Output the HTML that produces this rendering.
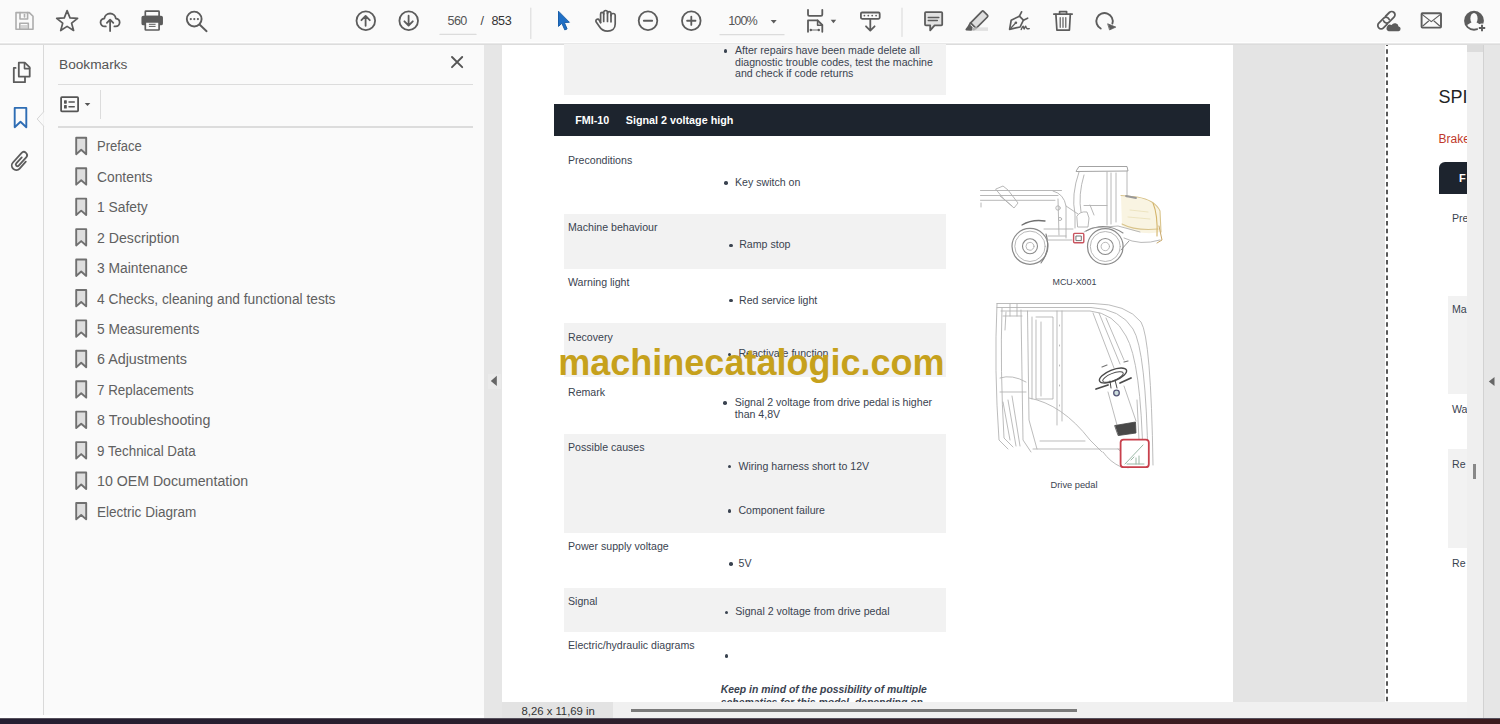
<!DOCTYPE html>
<html><head><meta charset="utf-8"><style>
*{margin:0;padding:0;box-sizing:border-box}
html,body{width:1500px;height:724px;overflow:hidden;background:#f8f8f8;font-family:"Liberation Sans",sans-serif}
.a{position:absolute}
.t{position:absolute;white-space:nowrap;line-height:1}
svg{position:absolute;overflow:visible}
</style></head><body>
<div class="a" style="left:0px;top:0px;width:1500px;height:43px;background:#fafafa;"></div>
<div class="a" style="left:0px;top:44px;width:43px;height:674px;background:#fbfbfb;"></div>
<div class="a" style="left:43px;top:44px;width:1px;height:674px;background:#d9d9d9;"></div>
<div class="a" style="left:44px;top:44px;width:1px;height:674px;background:#ffffff;"></div>
<div class="a" style="left:44px;top:44px;width:440px;height:674px;background:#fafafa;"></div>
<div class="a" style="left:484px;top:44px;width:18px;height:674px;background:#e6e6e6;"></div>
<div class="a" style="left:502px;top:44px;width:731px;height:659px;background:#ffffff;"></div>
<div class="a" style="left:1233px;top:44px;width:152px;height:659px;background:#e4e4e4;"></div>
<div class="a" style="left:1385px;top:44px;width:3px;height:659px;background:#ffffff;"></div>
<svg width="1500" height="724" style="position:absolute;left:0;top:0"><line x1="1387" y1="44" x2="1387" y2="703" stroke="#505050" stroke-width="1.9" stroke-dasharray="4.5 3.3" stroke-dashoffset="2.45"/></svg>
<div class="a" style="left:1388px;top:44px;width:79px;height:659px;background:#ffffff;"></div>
<div class="a" style="left:1467px;top:44px;width:16px;height:674px;background:#efefef;"></div>
<div class="a" style="left:1467px;top:44px;width:16px;height:8px;background:#dcdcdc;"></div>
<div class="a" style="left:1483px;top:44px;width:1px;height:674px;background:#d2d2d2;"></div>
<div class="a" style="left:1484px;top:44px;width:16px;height:674px;background:#e6e6e6;"></div>
<div class="a" style="left:502px;top:702px;width:965px;height:16px;background:#f0f0f0;"></div>
<div class="a" style="left:502px;top:702px;width:111px;height:16px;background:#e3e3e3;"></div>
<div class="a" style="left:631px;top:709px;width:446px;height:3px;background:#7a7a7a;"></div>
<div class="a" style="left:0px;top:715px;width:484px;height:3px;background:#ffffff;"></div>
<div class="a" style="left:0px;top:718px;width:1500px;height:6px;background:linear-gradient(to right,#241e31 0%,#2a1f2d 35%,#33202a 55%,#3a1c21 72%,#3b1a1e 100%);"></div>
<div class="a" style="left:0px;top:718px;width:1500px;height:1px;background:#55505c;"></div>
<div class="t" style="left:447.50px;top:15.33px;font-size:12.6px;color:#555;font-weight:400;font-style:normal;letter-spacing:-0.6px">560</div>
<div class="t" style="left:480.50px;top:15.33px;font-size:12.6px;color:#444;font-weight:400;font-style:normal;">/</div>
<div class="t" style="left:491.50px;top:15.33px;font-size:12.6px;color:#333;font-weight:400;font-style:normal;letter-spacing:-0.4px">853</div>
<div class="t" style="left:728.20px;top:15.33px;font-size:12.6px;color:#555;font-weight:400;font-style:normal;letter-spacing:-0.9px">100%</div>
<div class="a" style="left:0px;top:42px;width:1500px;height:1px;background:#fefefe;"></div>
<div class="a" style="left:0px;top:43px;width:1500px;height:1px;background:#e8e8e8;"></div>
<div class="a" style="left:0px;top:44px;width:1500px;height:1px;background:#dcdcdc;"></div>
<div class="t" style="left:521.50px;top:706.23px;font-size:11.3px;color:#333;font-weight:400;font-style:normal;">8,26 x 11,69 in</div>
<div class="t" style="left:59.00px;top:57.60px;font-size:13.7px;color:#555;font-weight:400;font-style:normal;">Bookmarks</div>
<div class="a" style="left:57.5px;top:83.5px;width:415px;height:1.5px;background:#dcdcdc;"></div>
<div class="a" style="left:100px;top:90px;width:1px;height:29px;background:#dcdcdc;"></div>
<div class="a" style="left:57.5px;top:126px;width:415px;height:1.5px;background:#dcdcdc;"></div>
<div class="t" style="left:97.30px;top:139.45px;font-size:14px;color:#606060;font-weight:400;font-style:normal;transform:scaleX(0.9298);transform-origin:0 0">Preface</div>
<div class="t" style="left:97.30px;top:169.88px;font-size:14px;color:#606060;font-weight:400;font-style:normal;transform:scaleX(0.9873);transform-origin:0 0">Contents</div>
<div class="t" style="left:97.30px;top:200.31px;font-size:14px;color:#606060;font-weight:400;font-style:normal;transform:scaleX(0.988);transform-origin:0 0">1 Safety</div>
<div class="t" style="left:97.30px;top:230.74px;font-size:14px;color:#606060;font-weight:400;font-style:normal;transform:scaleX(1.0088);transform-origin:0 0">2 Description</div>
<div class="t" style="left:97.30px;top:261.17px;font-size:14px;color:#606060;font-weight:400;font-style:normal;transform:scaleX(0.9889);transform-origin:0 0">3 Maintenance</div>
<div class="t" style="left:97.30px;top:291.60px;font-size:14px;color:#606060;font-weight:400;font-style:normal;transform:scaleX(0.9822);transform-origin:0 0">4 Checks, cleaning and functional tests</div>
<div class="t" style="left:97.30px;top:322.03px;font-size:14px;color:#606060;font-weight:400;font-style:normal;transform:scaleX(0.9806);transform-origin:0 0">5 Measurements</div>
<div class="t" style="left:97.30px;top:352.46px;font-size:14px;color:#606060;font-weight:400;font-style:normal;transform:scaleX(1.023);transform-origin:0 0">6 Adjustments</div>
<div class="t" style="left:97.30px;top:382.89px;font-size:14px;color:#606060;font-weight:400;font-style:normal;transform:scaleX(0.957);transform-origin:0 0">7 Replacements</div>
<div class="t" style="left:97.30px;top:413.32px;font-size:14px;color:#606060;font-weight:400;font-style:normal;transform:scaleX(1.0183);transform-origin:0 0">8 Troubleshooting</div>
<div class="t" style="left:97.30px;top:443.75px;font-size:14px;color:#606060;font-weight:400;font-style:normal;transform:scaleX(0.9549);transform-origin:0 0">9 Technical Data</div>
<div class="t" style="left:97.30px;top:474.18px;font-size:14px;color:#606060;font-weight:400;font-style:normal;transform:scaleX(1.0116);transform-origin:0 0">10 OEM Documentation</div>
<div class="t" style="left:97.30px;top:504.61px;font-size:14px;color:#606060;font-weight:400;font-style:normal;transform:scaleX(0.9673);transform-origin:0 0">Electric Diagram</div>
<div class="a" style="left:563.5px;top:44px;width:382.5px;height:50.5px;background:#f2f2f2;"></div>
<div class="a" style="left:723.6px;top:49.3px;width:3.6px;height:3.6px;background:#3a4350;border-radius:50%"></div>
<div class="t" style="left:735.00px;top:44.93px;font-size:10.6px;color:#3a4350;font-weight:400;font-style:normal;">After repairs have been made delete all</div>
<div class="t" style="left:735.00px;top:56.53px;font-size:10.6px;color:#3a4350;font-weight:400;font-style:normal;">diagnostic trouble codes, test the machine</div>
<div class="t" style="left:735.00px;top:68.03px;font-size:10.6px;color:#3a4350;font-weight:400;font-style:normal;">and check if code returns</div>
<div class="a" style="left:554px;top:103.7px;width:656px;height:32px;background:#1d242e;"></div>
<div class="t" style="left:575.20px;top:114.60px;font-size:10.75px;color:#fff;font-weight:700;font-style:normal;">FMI-10</div>
<div class="t" style="left:625.80px;top:114.60px;font-size:10.75px;color:#fff;font-weight:700;font-style:normal;">Signal 2 voltage high</div>
<div class="a" style="left:563.5px;top:213.5px;width:382.5px;height:55px;background:#f2f2f2;"></div>
<div class="a" style="left:563.5px;top:323.3px;width:382.5px;height:53.9px;background:#f2f2f2;"></div>
<div class="a" style="left:563.5px;top:434.1px;width:382.5px;height:99.4px;background:#f2f2f2;"></div>
<div class="a" style="left:563.5px;top:588px;width:382.5px;height:44.4px;background:#f2f2f2;"></div>
<div class="t" style="left:568.00px;top:154.53px;font-size:10.6px;color:#3a4350;font-weight:400;font-style:normal;">Preconditions</div>
<div class="a" style="left:724px;top:181.0px;width:3.6px;height:3.6px;background:#3a4350;border-radius:50%"></div>
<div class="t" style="left:735.00px;top:176.63px;font-size:10.6px;color:#3a4350;font-weight:400;font-style:normal;">Key switch on</div>
<div class="t" style="left:568.00px;top:221.63px;font-size:10.6px;color:#3a4350;font-weight:400;font-style:normal;">Machine behaviour</div>
<div class="a" style="left:729px;top:243.70000000000002px;width:3.6px;height:3.6px;background:#3a4350;border-radius:50%"></div>
<div class="t" style="left:739.20px;top:239.33px;font-size:10.6px;color:#3a4350;font-weight:400;font-style:normal;">Ramp stop</div>
<div class="t" style="left:568.00px;top:276.93px;font-size:10.6px;color:#3a4350;font-weight:400;font-style:normal;">Warning light</div>
<div class="a" style="left:729px;top:298.9px;width:3.6px;height:3.6px;background:#3a4350;border-radius:50%"></div>
<div class="t" style="left:739.00px;top:294.53px;font-size:10.6px;color:#3a4350;font-weight:400;font-style:normal;">Red service light</div>
<div class="t" style="left:568.00px;top:331.73px;font-size:10.6px;color:#3a4350;font-weight:400;font-style:normal;">Recovery</div>
<div class="a" style="left:727.8px;top:352.5px;width:3.6px;height:3.6px;background:#3a4350;border-radius:50%"></div>
<div class="t" style="left:738.40px;top:348.13px;font-size:10.6px;color:#3a4350;font-weight:400;font-style:normal;">Reactivate function</div>
<div class="t" style="left:568.00px;top:387.03px;font-size:10.6px;color:#3a4350;font-weight:400;font-style:normal;">Remark</div>
<div class="a" style="left:723.3px;top:401.4px;width:3.6px;height:3.6px;background:#3a4350;border-radius:50%"></div>
<div class="t" style="left:734.80px;top:397.03px;font-size:10.6px;color:#3a4350;font-weight:400;font-style:normal;">Signal 2 voltage from drive pedal is higher</div>
<div class="t" style="left:734.80px;top:408.93px;font-size:10.6px;color:#3a4350;font-weight:400;font-style:normal;">than 4,8V</div>
<div class="t" style="left:568.00px;top:442.33px;font-size:10.6px;color:#3a4350;font-weight:400;font-style:normal;">Possible causes</div>
<div class="a" style="left:727.8px;top:464.9px;width:3.6px;height:3.6px;background:#3a4350;border-radius:50%"></div>
<div class="t" style="left:738.40px;top:460.53px;font-size:10.6px;color:#3a4350;font-weight:400;font-style:normal;">Wiring harness short to 12V</div>
<div class="a" style="left:727.8px;top:509.0px;width:3.6px;height:3.6px;background:#3a4350;border-radius:50%"></div>
<div class="t" style="left:738.40px;top:504.63px;font-size:10.6px;color:#3a4350;font-weight:400;font-style:normal;">Component failure</div>
<div class="t" style="left:568.00px;top:541.03px;font-size:10.6px;color:#3a4350;font-weight:400;font-style:normal;">Power supply voltage</div>
<div class="a" style="left:729px;top:562.4px;width:3.6px;height:3.6px;background:#3a4350;border-radius:50%"></div>
<div class="t" style="left:738.60px;top:558.03px;font-size:10.6px;color:#3a4350;font-weight:400;font-style:normal;">5V</div>
<div class="t" style="left:568.00px;top:595.73px;font-size:10.6px;color:#3a4350;font-weight:400;font-style:normal;">Signal</div>
<div class="a" style="left:724.9px;top:610.5px;width:3.6px;height:3.6px;background:#3a4350;border-radius:50%"></div>
<div class="t" style="left:735.30px;top:606.13px;font-size:10.6px;color:#3a4350;font-weight:400;font-style:normal;">Signal 2 voltage from drive pedal</div>
<div class="t" style="left:568.00px;top:639.53px;font-size:10.6px;color:#3a4350;font-weight:400;font-style:normal;">Electric/hydraulic diagrams</div>
<div class="a" style="left:724.9px;top:654.4px;width:3.6px;height:3.6px;background:#3a4350;border-radius:50%"></div>
<div class="a" style="left:502px;top:44px;width:731px;height:658px;overflow:hidden">
<div class="t" style="left:218.80px;top:640.70px;font-size:10.4px;color:#3a4350;font-weight:700;font-style:italic;">Keep in mind of the possibility of multiple</div>
<div class="t" style="left:218.80px;top:654.00px;font-size:10.4px;color:#3a4350;font-weight:700;font-style:italic;">schematics for this model, depending on</div>
</div>
<div class="t" style="left:1052.50px;top:278.27px;font-size:8.9px;color:#3a4350;font-weight:400;font-style:normal;">MCU-X001</div>
<div class="t" style="left:1050.50px;top:481.03px;font-size:9.3px;color:#3a4350;font-weight:400;font-style:normal;">Drive pedal</div>
<svg width="1500" height="724" style="left:0;top:0;position:absolute" fill="none" stroke-linecap="round" stroke-linejoin="round">
<path d="M1121,196 L1137,197.5 Q1155,201 1160,212 L1161,232 Q1140,236 1122,226 Z" fill="#f9f4e2" stroke="none"/>
<g stroke="#b0b0b0" stroke-width="0.9">
<path d="M980.5,190.5 H1061.5 M980.5,195.5 H1058 M980.5,200.3 H1055 M981,203 V207"/>
<path d="M996,189 L1003,186 L1008,190 L1018,203 L1014,208 L1004,199 Z M1000,196 L1012,206"/>
<path d="M1053,191 Q1064,194 1066,206 L1066,238 M1058,199 L1059,235 M1048,236 L1066,236"/>
<circle cx="1058" cy="208" r="2.2" /><circle cx="1060" cy="219" r="1.6"/>
<circle cx="1030" cy="246.3" r="18" stroke="#8a8a8a" stroke-width="1.2"/><circle cx="1030" cy="246.3" r="15.2"/><circle cx="1030" cy="246.3" r="7.5" stroke="#8a8a8a" stroke-width="1.1"/><circle cx="1030" cy="246.3" r="4"/>
<path d="M1022,225 Q1032,219 1045,221" stroke="#707070" stroke-width="1.3"/><path d="M1046,234 Q1051,250 1041,263" stroke="#808080" stroke-width="1.1"/>
<path d="M1044,229 L1073,229 M1047,240 L1072,240 M1084,232 L1092,228 L1118,226 L1140,232 M1066,206 L1078,214"/>
<path d="M1076.5,170.5 L1079,166.5 H1127 L1128,171 L1076.5,171.5 Z" stroke="#999"/>
<path d="M1079,172 Q1071,195 1075,214 L1075,228 M1084,175 Q1078,195 1081,212 M1084,205.5 H1107 M1107,172 V225 M1111,173 V224 M1116,173 V222 M1127,171 V197 M1090,205 L1094,215"/>
<path d="M1077,216 Q1080,211 1087,212 L1089,218 L1088,227 L1078,227 Z"/>
<circle cx="1105.3" cy="246.5" r="17.8" stroke="#8a8a8a" stroke-width="1.2"/><circle cx="1105.3" cy="246.5" r="15"/><circle cx="1105.3" cy="246.5" r="8" stroke="#8a8a8a" stroke-width="1.1"/><circle cx="1105.3" cy="246.5" r="4.2"/>
<path d="M1086,231 Q1105,221 1123,233" stroke="#8a8a8a" stroke-width="1.1"/><path d="M1121,250 L1129,241" stroke="#888"/><path d="M1124,238 Q1140,246 1160,240"/>
</g>
<g stroke="#d9c48c" stroke-width="1.1"><path d="M1121,195.5 L1137,197 Q1155,200 1160,211 L1161,232 M1122,224 Q1135,231 1158,229"/><path d="M1153,203 Q1158,215 1157,236" stroke="#d4b46a"/><path d="M1126,196 L1136,198" stroke="#999" stroke-width="1.8"/><path d="M1130,210 L1148,212 M1128,217 L1150,219" stroke="#eadfb8" stroke-width="0.8"/></g>
<path d="M1159,226 L1162,240 L1157,243" stroke="#c9a86a" stroke-width="1"/>
<rect x="1073.6" y="233.4" width="10.2" height="9.4" rx="1" stroke="#c9535e" stroke-width="1.4"/><rect x="1076.3" y="236" width="5" height="4.6" stroke="#666" stroke-width="0.9"/>
<g stroke="#b0b0b0" stroke-width="0.85">
<path d="M997,303.5 H1093 Q1127,304 1141,322 Q1151,338 1153,465"/>
<path d="M997,307.5 H1091 Q1121,309 1133,329 Q1146,350 1148,462"/>
<path d="M1001,311 H1090 Q1114,313 1126,336 Q1141,362 1143,460"/>
<path d="M997,303.5 Q994,370 999,440 L1008,449 M1002,308 Q1000,370 1004,438 L1013,447 M1006,312 L1005,330 M1010,304 V316 M1017,304 V316 M1003,316 H1022"/>
<path d="M1021,310 L1023,440 L1031,452 M1027.5,311 L1029,420 L1037,449"/>
<path d="M1032,317 V399 M1036,320 V399 H1053 V317 H1036 M1041,322 V396"/>
<path d="M1057,311 V425 M1062,311 V421 M1059.5,325 v1 M1059.5,345 v1 M1059.5,365 v1 M1059.5,385 v1 M1059.5,405 v1"/>
<path d="M1029,398 Q1062,404 1090,440 L1102,452 M1033,449 H1120 M1040,441 H1085"/>
<path d="M1093,313 L1114,368 M1099,313 L1120,364 M1106,318 L1124,360"/>
<path d="M1000,378 Q1012,374 1026,382 M1000,392 H1026 M1003,402 L1010,440 M1008,400 L1016,446 M1012,396 L1020,446"/>
<path d="M1108,392 L1117,425 M1124,386 L1136,421 M1137,400 L1139,440 M1130,440 L1128,468 M1103,452 Q1110,462 1121,467 M1125,455 L1118,449"/>
</g>
<g stroke="#4a4a4a" stroke-width="1.4"><ellipse cx="1113" cy="375.5" rx="14.5" ry="5.6" transform="rotate(-22 1113 375.5)"/><ellipse cx="1113" cy="377" rx="11" ry="3.6" transform="rotate(-22 1113 377)" stroke-width="0.9"/><path d="M1096,389 L1108,385 M1120,383 L1131,378" stroke-width="1.8"/><path d="M1110,381 L1111,388 M1115,380 L1117,388" stroke-width="1"/></g>
<path d="M1102,367 L1107,365 M1124,362 L1128,361" stroke="#777" stroke-width="1.2"/>
<circle cx="1116.5" cy="393" r="2.8" stroke="#557" stroke-width="1.3" fill="#cdd"/>
<path d="M1115,425.5 L1135.5,422 L1136,433 L1118.5,435.5 Z" fill="#484848" stroke="#484848" stroke-width="0.8"/>
<rect x="1120.6" y="439.6" width="28.2" height="27.6" rx="3" stroke="#c8404c" stroke-width="1.8" fill="#fff"/>
<path d="M1125,464 L1143,445 M1127,464 H1144 M1136,458 V464 M1139,456 V464 M1131,460 L1134,457" stroke="#9bb8a6" stroke-width="1"/>
</svg>
<div class="t" style="left:558.30px;top:344.83px;font-size:36px;color:#c6a11c;font-weight:700;font-style:normal;">machinecatalogic.com</div>
<div class="a" style="left:1388px;top:44px;width:79px;height:659px;overflow:hidden">
<div class="t" style="left:50.60px;top:43.76px;font-size:18px;color:#222;font-weight:400;font-style:normal;">SPI</div>
<div class="t" style="left:50.60px;top:88.64px;font-size:12px;color:#c0392b;font-weight:400;font-style:normal;">Brake</div>
<div class="a" style="left:50.5px;top:117.5px;width:60px;height:32.5px;background:#1d242e;border-radius:6px 0 0 0"></div>
<div class="t" style="left:71.00px;top:128.69px;font-size:11px;color:#fff;font-weight:700;font-style:normal;">F</div>
<div class="t" style="left:64.00px;top:169.03px;font-size:10.6px;color:#3a4350;font-weight:400;font-style:normal;">Pre</div>
<div class="a" style="left:60px;top:251.8px;width:30px;height:98.5px;background:#f2f2f2"></div>
<div class="t" style="left:64.00px;top:260.03px;font-size:10.6px;color:#3a4350;font-weight:400;font-style:normal;">Ma</div>
<div class="t" style="left:64.00px;top:360.03px;font-size:10.6px;color:#3a4350;font-weight:400;font-style:normal;">Wa</div>
<div class="a" style="left:60px;top:405.4px;width:30px;height:98.6px;background:#f2f2f2"></div>
<div class="t" style="left:64.00px;top:414.73px;font-size:10.6px;color:#3a4350;font-weight:400;font-style:normal;">Re</div>
<div class="t" style="left:64.00px;top:513.83px;font-size:10.6px;color:#3a4350;font-weight:400;font-style:normal;">Re</div>
</div>
<div class="a" style="left:1473px;top:464px;width:2.5px;height:14.5px;background:#888;"></div>
<svg width="1500" height="724" style="left:0;top:0;position:absolute" fill="none" stroke-linecap="round" stroke-linejoin="round">
<g stroke="#adadad" stroke-width="1.6"><path d="M16,12.6 H29.3 L33,16.3 V29.2 H16 Z"/><path d="M20,12.6 V19 H27.6 V12.6"/><path d="M19.8,29.2 V23.2 H28.3 V29.2"/><path d="M24.5,14.5 V17" /><path d="M21,26 H27 M21,28 H27" stroke-width="1"/></g>
<path d="M67.1,10.6 L70,17.9 L77.6,18.3 L71.6,23.2 L73.6,30.5 L67.1,26.4 L60.7,30.5 L62.7,23.2 L56.7,18.3 L64.3,17.9 Z" stroke="#5c5c5c" stroke-width="1.7"/>
<g stroke="#5c5c5c" stroke-width="1.8"><path d="M105.8,26.4 H104.6 A3.95,3.95 0 0 1 104.4,18.5 A5.75,5.75 0 0 1 115.8,18.5 A3.95,3.95 0 0 1 115.6,26.4 H114.4"/><path d="M110.1,31 V19.8 M106.9,22.8 L110.1,19.6 L113.3,22.8"/></g>
<g stroke="#5c5c5c" stroke-width="1.7"><rect x="145.3" y="11.2" width="13.8" height="5.4" rx="0.6"/><rect x="142.3" y="16.6" width="19.8" height="7.8" rx="1" fill="#5c5c5c"/><rect x="145.3" y="21.8" width="13.8" height="8.2" rx="0.6" fill="#fafafa"/><path d="M149.3,24.3 H155.2 M149.3,26.4 H155.2" stroke-width="1"/></g>
<g stroke="#5c5c5c" stroke-width="1.9"><circle cx="194.2" cy="19.05" r="7.4"/><path d="M199.8,24.7 L206.6,31.2"/></g><g fill="#5c5c5c"><circle cx="190.8" cy="19.1" r="1.1"/><circle cx="194.3" cy="19.1" r="1.1"/><circle cx="197.9" cy="19.1" r="1.1"/></g>
<g stroke="#5c5c5c" stroke-width="1.8"><circle cx="365.8" cy="20.75" r="9.3"/><path d="M365.6,25.8 V16.3 M361.4,20.2 L365.6,16 L369.8,20.2"/><circle cx="408.7" cy="20.75" r="9.3"/><path d="M408.6,15.7 V25.2 M404.4,21.3 L408.6,25.5 L412.8,21.3"/></g>
<path d="M530.8,8 V38.5 M902,8 V36.5" stroke="#dedede" stroke-width="1.2"/>
<path d="M558.5,11.6 L558.5,26.4 L561.9,23.3 L564.8,29.9 L567.1,28.9 L564.3,22.5 L569,22.3 Z" fill="#1f6fc6" stroke="#1a5ea8" stroke-width="1"/>
<g stroke="#5c5c5c" stroke-width="1.7"><path d="M600.6,22.6 V13.9 A1.55,1.55 0 0 1 603.7,13.9 V21.4"/><path d="M603.7,13.9 V12.4 A1.9,1.9 0 0 1 607.5,12.4 V21.4"/><path d="M607.5,13.4 A1.75,1.75 0 0 1 611,13.4 V21.8"/><path d="M611,15.6 A2.1,2.1 0 0 1 615.2,15.6 V24 C615.2,28.6 612,31.1 607.6,31.1 C603.4,31.1 601,29.4 599,26 L596.2,21.9 A1.75,1.75 0 0 1 599.1,19.9 L600.6,22.6"/></g>
<g stroke="#5c5c5c" stroke-width="1.8"><circle cx="648" cy="20.75" r="9.3"/><path d="M643.8,20.75 H652.2"/><circle cx="691.3" cy="20.75" r="9.3"/><path d="M687.1,20.75 H695.5 M691.3,16.55 V24.95"/></g>
<path d="M770.7,20 H776.7 L773.7,23.4 Z" fill="#5c5c5c"/>
<path d="M720,34.7 H784" stroke="#dcdcdc" stroke-width="1.3"/>
<path d="M440,34.4 H476" stroke="#dcdcdc" stroke-width="1.3"/>
<g stroke="#5c5c5c" stroke-width="1.8"><path d="M808,9.8 V14.6 Q808,15.9 809.3,15.9 H821 Q822.3,15.9 822.3,14.6 V9.8"/><path d="M808,31.8 V20.4 H817.6 L822.3,25 V31.8"/><path d="M817.6,20.4 V25.2 H822.3" stroke-width="1.6"/></g>
<g fill="#5c5c5c"><circle cx="810.8" cy="30" r="1.2"/><circle cx="818.8" cy="30" r="1.2"/></g><path d="M811,30 H818.6" stroke="#5c5c5c" stroke-width="0.9"/>
<path d="M830.7,19.8 H836.2 L833.45,23.3 Z" fill="#5c5c5c"/>
<g stroke="#5c5c5c" stroke-width="1.8"><rect x="860.9" y="12.5" width="18.8" height="6.3" rx="1.2"/><path d="M870.3,19.5 V30.4 M866,26.3 L870.3,30.6 L874.6,26.3"/></g><g fill="#5c5c5c"><circle cx="864.4" cy="15.6" r="0.9"/><circle cx="868.3" cy="15.6" r="0.9"/><circle cx="872.2" cy="15.6" r="0.9"/><circle cx="876.1" cy="15.6" r="0.9"/></g>
<g stroke="#5c5c5c" stroke-width="1.8"><path d="M925.9,12.1 H941.3 Q942.2,12.1 942.2,13 V24.5 Q942.2,25.4 941.3,25.4 H934.6 L930.2,30.4 V25.4 H925.9 Q925,25.4 925,24.5 V13 Q925,12.1 925.9,12.1 Z" fill="#e2e2e2"/><path d="M928.3,17.4 H938.8 M928.3,20.5 H937.3" stroke-width="1.5"/></g>
<g stroke="#5c5c5c" stroke-width="1.7"><path d="M983.6,11.4 L987.4,15.2 Q988.3,16.1 987.4,17 L976.1,28.3 L970.6,22.8 L981.9,11.4 Q982.7,10.5 983.6,11.4 Z" fill="#dedede"/><path d="M970.6,22.8 L969.2,25.2 L973.7,29.7 L976.1,28.3"/><path d="M969.2,25.6 L966.3,29.6 L970.8,30 L972.8,29.2 Z" fill="#5c5c5c"/></g><rect x="972" y="27.4" width="16" height="3.5" fill="#d6d6d6" opacity="0.7"/>
<g stroke="#5c5c5c" stroke-width="1.7"><path d="M1009.6,29.4 L1011.2,20.2 L1019.4,16.2 L1023.4,20.2 L1020.1,27 Z"/><path d="M1019.4,16.2 L1021.6,11.8 M1023.4,20.2 L1027.6,18.2"/><path d="M1010,29 L1015.6,23" stroke-width="1.2"/></g><circle cx="1015.9" cy="22.8" r="1.3" fill="#5c5c5c"/><path d="M1021.2,29.6 Q1022.4,26.4 1023.2,26.2 Q1023.4,28.6 1024.2,29 Q1025,26.6 1025.8,26.2 Q1026,29.2 1029.3,28.6" stroke="#5c5c5c" stroke-width="1.4"/>
<g stroke="#5c5c5c" stroke-width="1.7"><path d="M1053.8,14.1 H1072.2"/><path d="M1059.6,13.8 V11.6 H1066.6 V13.8"/><path d="M1055.9,14.4 L1056.9,30.2 H1069.4 L1070.3,14.4"/><path d="M1060.2,17.6 V27.3 M1063,17.6 V27.3 M1065.8,17.6 V27.3" stroke-width="1.2"/></g>
<path d="M1100.7,28.5 A8.2,8.2 0 1 1 1112.4,23.6" stroke="#5c5c5c" stroke-width="1.9"/><path d="M1108,23.9 L1115.8,27.1 L1109.9,29.8 Z" fill="#5c5c5c" stroke="#5c5c5c" stroke-width="0.8"/>
<g stroke="#5c5c5c" stroke-width="1.8"><g transform="translate(1389.2,17.3) rotate(-45)"><path d="M-1.8,-3.3 H3.5 A3.3,3.3 0 0 1 3.5,3.3 H-3.5 A3.3,3.3 0 0 1 -6.45,-1.5"/></g><g transform="translate(1383.6,23.0) rotate(-45)"><path d="M1.8,3.3 H-3.5 A3.3,3.3 0 0 1 -3.5,-3.3 H3.5 A3.3,3.3 0 0 1 6.45,1.5"/></g></g>
<path d="M1388.6,31.3 H1398.6 A2.5,2.5 0 0 0 1398.6,26.4 A3.8,3.8 0 0 0 1391.6,25 A3.1,3.1 0 0 0 1388.6,31.3 Z" fill="#5c5c5c"/>
<g stroke="#5c5c5c"><rect x="1421.6" y="13.2" width="19.4" height="14.4" rx="0.8" stroke-width="1.9"/><path d="M1422.4,14.6 L1431.3,21.6 L1440.2,14.6" stroke-width="1.2"/><path d="M1422.8,26 L1428.6,21 M1434,21 L1439.8,26" stroke-width="1.1"/></g>
<defs><clipPath id="uc"><circle cx="1474" cy="20.75" r="8.1"/></clipPath></defs>
<circle cx="1474" cy="20.75" r="9.9" fill="#5c5c5c"/>
<g clip-path="url(#uc)" fill="#fafafa"><ellipse cx="1474" cy="18.4" rx="3.6" ry="5.4"/><path d="M1471.6,22.2 H1476.4 L1482.5,26 V32 H1465.5 V26 Z"/></g>
<circle cx="1482" cy="28" r="4.4" fill="#fafafa"/>
<path d="M1478.8,28 H1485.2 M1482,24.8 V31.2" stroke="#5c5c5c" stroke-width="1.9" stroke-linecap="butt"/>
<path d="M452,57 L462.2,67.2 M462.2,57 L452,67.2" stroke="#555" stroke-width="1.9"/>
<g stroke="#555"><rect x="61.1" y="97.1" width="17" height="14.2" rx="0.8" stroke-width="1.8"/><path d="M69,102 H74.3 M69,106.7 H74.3" stroke-width="1.4"/></g><g fill="#555"><rect x="64" y="100.2" width="2.8" height="3.5" rx="0.6"/><rect x="64" y="105" width="2.8" height="3.6" rx="0.6"/></g><path d="M84.7,103 H90.3 L87.5,106 Z" fill="#555"/>
<g stroke="#5c5c5c" stroke-width="1.8"><path d="M18.8,62.7 H24.8 L29.7,67.4 V76.6 H18.8 Z"/><path d="M24.5,63 V68.6 H29.6" stroke-width="1.6"/><path d="M15.6,67.9 H13.8 V82.2 H25 V77.5"/></g>
<path d="M14.7,107.9 H26.3 V127.2 L20.5,121.8 L14.7,127.2 Z" stroke="#2e6db4" stroke-width="1.9"/>
<path d="M43.5,112 L37.2,119 L43.5,126" fill="#fafafa" stroke="#d6d6d6" stroke-width="1"/><rect x="43.4" y="112.6" width="1.2" height="12.8" fill="#fafafa"/>
<g transform="translate(19.9,161.5) rotate(42)" stroke="#5c5c5c" stroke-width="1.8"><path d="M4.5,-3.8 V5.4 A4.5,4.5 0 0 1 -4.5,5.4 V-7.3 A3.2,3.2 0 0 1 1.9,-7.3 V3.9 A1.65,1.65 0 0 1 -1.4,3.9 V-4.3"/></g>
<path d="M76.2,137.80 H86.2 V154.20 L81.2,149.80 L76.2,154.20 Z" fill="#dedede" stroke="#707070" stroke-width="1.9"/>
<path d="M76.2,168.23 H86.2 V184.63 L81.2,180.23 L76.2,184.63 Z" fill="#dedede" stroke="#707070" stroke-width="1.9"/>
<path d="M76.2,198.66 H86.2 V215.06 L81.2,210.66 L76.2,215.06 Z" fill="#dedede" stroke="#707070" stroke-width="1.9"/>
<path d="M76.2,229.09 H86.2 V245.49 L81.2,241.09 L76.2,245.49 Z" fill="#dedede" stroke="#707070" stroke-width="1.9"/>
<path d="M76.2,259.52 H86.2 V275.92 L81.2,271.52 L76.2,275.92 Z" fill="#dedede" stroke="#707070" stroke-width="1.9"/>
<path d="M76.2,289.95 H86.2 V306.35 L81.2,301.95 L76.2,306.35 Z" fill="#dedede" stroke="#707070" stroke-width="1.9"/>
<path d="M76.2,320.38 H86.2 V336.78 L81.2,332.38 L76.2,336.78 Z" fill="#dedede" stroke="#707070" stroke-width="1.9"/>
<path d="M76.2,350.81 H86.2 V367.21 L81.2,362.81 L76.2,367.21 Z" fill="#dedede" stroke="#707070" stroke-width="1.9"/>
<path d="M76.2,381.24 H86.2 V397.64 L81.2,393.24 L76.2,397.64 Z" fill="#dedede" stroke="#707070" stroke-width="1.9"/>
<path d="M76.2,411.67 H86.2 V428.07 L81.2,423.67 L76.2,428.07 Z" fill="#dedede" stroke="#707070" stroke-width="1.9"/>
<path d="M76.2,442.10 H86.2 V458.50 L81.2,454.10 L76.2,458.50 Z" fill="#dedede" stroke="#707070" stroke-width="1.9"/>
<path d="M76.2,472.53 H86.2 V488.93 L81.2,484.53 L76.2,488.93 Z" fill="#dedede" stroke="#707070" stroke-width="1.9"/>
<path d="M76.2,502.96 H86.2 V519.36 L81.2,514.96 L76.2,519.36 Z" fill="#dedede" stroke="#707070" stroke-width="1.9"/>
<rect x="488" y="374" width="13" height="15" fill="#f2f2f2" opacity="0.35"/><path d="M496.8,375.8 V386 L490.8,380.9 Z" fill="#666"/>
<path d="M1494.5,377 V386 L1488.8,381.5 Z" fill="#666"/>
</svg>
</body></html>
